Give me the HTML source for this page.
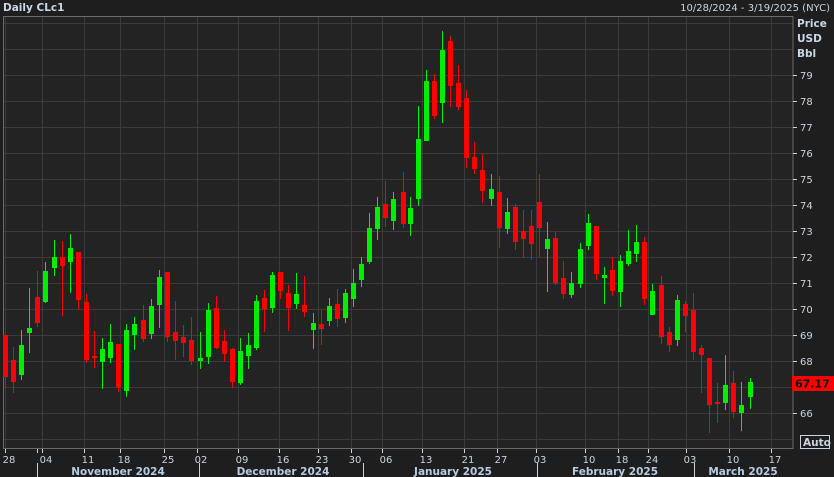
<!DOCTYPE html>
<html><head><meta charset="utf-8"><style>
html,body{margin:0;padding:0;background:#1e1e1e;width:834px;height:477px;overflow:hidden}
svg{display:block}
text{font-family:"DejaVu Sans","Liberation Sans",sans-serif}
</style></head><body>
<svg id="c" width="834" height="477" xmlns="http://www.w3.org/2000/svg">
<rect width="834" height="477" fill="#1e1e1e"/>
<rect x="3" y="16" width="790" height="432" fill="#222322"/>
<g id="grid" stroke="#3a3b3a" stroke-width="1"></g>
<rect x="3.5" y="16.5" width="789.5" height="432" fill="none" stroke="#6a6a6a"/>
<g id="cand"></g>
<text x="3" y="11" font-size="10.5" font-weight="bold" fill="#c8d8ea">Daily CLc1</text>
<text x="830" y="11" font-size="10" fill="#c8d4e0" text-anchor="end">10/28/2024 - 3/19/2025 (NYC)</text>
<text x="797" y="27" font-size="10.5" font-weight="bold" fill="#c8d8ea">Price</text>
<text x="797" y="42" font-size="10.5" font-weight="bold" fill="#c8d8ea">USD</text>
<text x="797" y="57" font-size="10.5" font-weight="bold" fill="#c8d8ea">Bbl</text>
<g id="yl" font-size="10" fill="#c8d4e0"></g>
<g id="xl" font-size="10" fill="#c8d4e0" text-anchor="middle"></g>
<g font-size="10.5" font-weight="bold" fill="#b8cce4" text-anchor="middle">
<text x="118" y="475">November 2024</text>
<text x="283" y="475">December 2024</text>
<text x="453" y="475">January 2025</text>
<text x="615" y="475">February 2025</text>
<text x="743" y="475">March 2025</text>
</g>
<g stroke="#c8d4e0" stroke-width="1">
<line x1="37.5" y1="463" x2="37.5" y2="477"/><line x1="199.5" y1="463" x2="199.5" y2="477"/>
<line x1="363.5" y1="463" x2="363.5" y2="477"/><line x1="537.5" y1="463" x2="537.5" y2="477"/>
<line x1="694.5" y1="463" x2="694.5" y2="477"/>
</g>
<rect x="792" y="376" width="42" height="15" fill="#ff0000"/>
<text x="795" y="387.5" font-size="11" font-weight="bold" fill="#111">67.17</text>
<rect x="800.5" y="435.5" width="29" height="13" fill="#1e1e1e" stroke="#c8d4e0"/>
<text x="803" y="446" font-size="10.5" font-weight="bold" fill="#c8d4e0">Auto</text>
</svg>
<script>
var NS="http://www.w3.org/2000/svg";
function el(p,t,a){var e=document.createElementNS(NS,t);for(var k in a)e.setAttribute(k,a[k]);p.appendChild(e);return e;}
var g=document.getElementById('grid'),yl=document.getElementById('yl'),xl=document.getElementById('xl');
for(var p=65;p<=81;p++){var y=361-(p-68)*26;if(y<17||y>447)continue;
 el(g,'line',{x1:4,x2:793,y1:y+.5,y2:y+.5});
 if(p%2==0||true){ if(p<=79&&p>=66&&p!=67){el(yl,'line',{x1:793,x2:797,y1:y+.5,y2:y+.5,stroke:'#c8d4e0'});var t=el(yl,'text',{x:800,y:y+4});t.textContent=p;}}
}
var ticks=[[9,'28'],[46,'04'],[88,'11'],[124,'18'],[168,'25'],[201,'02'],[242,'09'],[283,'16'],[322,'23'],[355,'30'],[386,'06'],[426,'13'],[468,'21'],[501,'27'],[540,'03'],[589,'10'],[622,'18'],[652,'24'],[690,'03'],[733,'10'],[775,'17']];
ticks.forEach(function(t){var x=t[0]-4;el(g,'line',{x1:x+.5,x2:x+.5,y1:17,y2:448});
 el(xl,'line',{x1:x+.5,x2:x+.5,y1:449,y2:453,stroke:'#c8d4e0'});
 var tx=el(xl,'text',{x:t[0],y:463});tx.textContent=t[1];});
el(xl,'line',{x1:37.5,x2:37.5,y1:449,y2:453,stroke:'#c8d4e0'});
var C=[[5,335,335,377,387,'r'],[13,347,360,382,393,'r'],[21,330,345,375,380,'g'],[29,288,328,333,353,'g'],[37,271,297,323,327,'r'],[45,262,271,302,303,'g'],[54,240,257,268,276,'g'],[62,241,257,266,316,'r'],[70,234,248,262,293,'g'],[78,252,252,300,310,'r'],[86,294,302,360,363,'r'],[94,331,356,358,368,'r'],[102,338,349,362,389,'g'],[110,324,342,358,363,'g'],[118,344,344,387,392,'r'],[126,324,330,391,397,'g'],[134,317,324,335,350,'g'],[143,305,320,339,342,'r'],[151,299,306,334,339,'g'],[159,270,277,305,328,'g'],[167,272,272,337,342,'r'],[175,301,332,341,360,'r'],[183,325,337,343,357,'r'],[191,317,340,361,365,'r'],[200,332,358,361,369,'g'],[208,303,310,357,364,'g'],[216,296,308,348,349,'r'],[224,330,341,354,362,'r'],[232,348,349,382,388,'r'],[240,338,351,383,385,'g'],[248,333,345,356,369,'g'],[256,295,301,348,350,'g'],[264,290,298,309,332,'r'],[272,272,275,308,313,'g'],[280,272,272,291,299,'r'],[288,285,293,308,331,'r'],[296,273,294,304,309,'g'],[304,276,305,312,317,'r'],[313,313,323,330,349,'g'],[321,310,324,329,345,'r'],[329,298,306,321,326,'g'],[337,289,304,319,327,'r'],[345,289,293,318,323,'g'],[353,269,283,299,307,'g'],[361,257,264,280,287,'g'],[369,213,228,262,264,'g'],[377,197,207,229,240,'g'],[385,181,204,218,227,'r'],[393,192,199,221,230,'g'],[403,172,192,224,228,'r'],[410,197,208,224,236,'g'],[418,106,139,199,206,'g'],[426,70,81,141,141,'g'],[434,74,81,116,119,'r'],[442,31,50,103,123,'g'],[450,36,41,86,107,'r'],[458,65,83,107,110,'r'],[466,90,98,158,168,'r'],[474,142,157,169,174,'r'],[482,154,170,191,203,'r'],[491,174,189,199,206,'g'],[499,176,192,228,248,'r'],[507,198,212,229,234,'g'],[515,204,207,242,250,'r'],[523,210,231,239,258,'r'],[531,210,226,244,260,'r'],[539,174,202,228,257,'r'],[547,222,239,249,292,'g'],[555,232,238,283,285,'r'],[563,261,278,294,299,'r'],[571,272,283,295,298,'g'],[580,243,249,284,288,'g'],[588,214,223,246,250,'g'],[596,226,226,274,280,'r'],[604,267,275,278,304,'g'],[612,257,270,291,296,'r'],[620,255,261,292,307,'g'],[628,230,251,264,266,'g'],[636,225,242,254,262,'g'],[644,237,242,299,305,'r'],[652,284,291,315,315,'g'],[661,276,285,337,344,'r'],[669,327,332,345,352,'r'],[677,295,300,340,346,'g'],[685,301,304,316,332,'r'],[693,293,310,352,360,'r'],[701,345,348,355,393,'r'],[709,358,358,405,433,'r'],[717,383,402,404,423,'r'],[725,355,385,403,410,'g'],[733,371,383,412,418,'r'],[741,382,405,413,431,'g'],[750,378,382,397,409,'g']];
var cg=document.getElementById('cand');
C.forEach(function(c){var col=c[5]=='g'?'#00ee00':'#ff0000';
 el(cg,'rect',{x:c[0],y:c[1],width:1,height:c[4]-c[1],fill:col});
 el(cg,'rect',{x:c[0]-2,y:c[2],width:5,height:Math.max(2,c[3]-c[2]),fill:col});});
</script>
</body></html>
